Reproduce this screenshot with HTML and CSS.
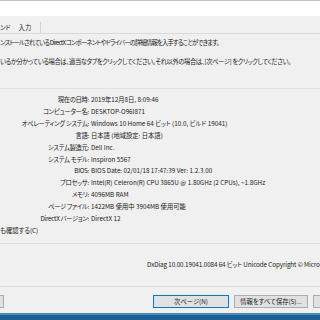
FILE: index.html
```html
<!DOCTYPE html>
<html lang="ja">
<head>
<meta charset="utf-8">
<link rel="stylesheet" href="styles.css">
</head>
<body>
<div class="screen">
  <div class="topbar"></div>
  <div class="tabs">
    <span class="tab">ンド</span>
    <span class="tab last">入力</span>
  </div>
  <div class="page">
    <p class="intro first">ンストールされている DirectX コンポーネントやドライバーの詳細情報を入手することができます。</p>
    <p class="intro second">いるか分かっている場合は、適当なタブをクリックしてください。それ以外の場合は、[次ページ] をクリックしてください。</p>
    <div class="group">
      <div class="info">
        <span class="label">現在の日時:</span><span class="value">2019年12月8日, 8:09:46</span>
        <span class="label">コンピューター名:</span><span class="value">DESKTOP-O96I871</span>
        <span class="label">オペレーティング システム:</span><span class="value">Windows 10 Home 64 ビット (10.0, ビルド 19041)</span>
        <span class="label">言語:</span><span class="value">日本語 (地域設定: 日本語)</span>
        <span class="label">システム製造元:</span><span class="value">Dell Inc.</span>
        <span class="label">システム モデル:</span><span class="value">Inspiron 5567</span>
        <span class="label">BIOS:</span><span class="value">BIOS Date: 02/01/18 17:47:39 Ver: 1.2.3.00</span>
        <span class="label">プロセッサ:</span><span class="value">Intel(R) Celeron(R) CPU 3865U @ 1.80GHz (2 CPUs), ~1.8GHz</span>
        <span class="label">メモリ:</span><span class="value">4096MB RAM</span>
        <span class="label">ページ ファイル:</span><span class="value">1422MB 使用中 3904MB 使用可能</span>
        <span class="label">DirectX バージョン:</span><span class="value">DirectX 12</span>
      </div>
      <div class="check">も確認する(C)</div>
    </div>
    <div class="version">DxDiag 10.00.19041.0084 64 ビット Unicode Copyright © Microsoft. All rights reserved.</div>
  </div>
  <div class="buttons">
    <span class="btn help">ヘルプ(H)</span>
    <span class="btn next">次ページ(N)</span>
    <span class="btn save">情報をすべて保存(S)...</span>
    <span class="btn exit">終了(X)</span>
  </div>
  <div class="taskbar"></div>
</div>
</body>
</html>
```
FILE: styles.css
```css
html, body {
  margin: 0;
  padding: 0;
  background: #f0f0f0;
}
.screen {
  width: 320px;
  height: 320px;
  overflow: hidden;
  background: #f0f0f0;
  font-family: "Noto Sans CJK JP", "Noto Sans", sans-serif;
  font-feature-settings: "palt";
  font-size: 6.3px;
  color: #1a1a1a;
  white-space: nowrap;
}
.topbar {
  height: 15px;
  background: #ffffff;
  border-top: 1px solid #c4c4c4;
}
.tabs {
  height: 17px;
  display: flex;
  align-items: flex-end;
}
.tab {
  height: 11px;
  line-height: 11px;
  padding: 0 3px;
}
.tab:first-child {
  padding-left: 0;
  padding-right: 5px;
}
.tab.last {
  padding-right: 9px;
  border-right: 1px solid #d4d4d4;
}
.page {
  border-top: 1px solid #dadada;
  border-bottom: 1px solid #dcdcdc;
  padding-bottom: 15px;
}
.intro {
  margin: 0;
  line-height: 12px;
}
.intro.first { margin-top: 3px; letter-spacing: -0.8px; }
.intro.second { margin-top: 7px; letter-spacing: -0.4px; }
.group {
  margin-top: 20px;
  border-top: 1px solid #e0e0e0;
  border-bottom: 1px solid #dcdcdc;
  padding: 5px 0 6px;
}
.info {
  display: grid;
  grid-template-columns: 89px 1fr;
  column-gap: 2px;
  line-height: 11.9px;
}
.label { text-align: right; letter-spacing: -0.3px; }
.check { line-height: 12px; }
.version {
  margin-top: 15px;
  padding-left: 147px;
  line-height: 12px;
  letter-spacing: -0.1px;
}
.buttons {
  display: flex;
  padding-top: 8px;
  height: 13px;
}
.btn {
  flex: none;
  box-sizing: border-box;
  height: 13px;
  line-height: 11px;
  text-align: center;
  background: #e1e1e1;
  border: 1px solid #adadad;
}
.help { width: 75px; margin-left: -71px; }
.next { width: 76px; margin-left: 149px; border-color: #0078d7; }
.save { width: 74px; margin-left: 5px; }
.exit { width: 74px; margin-left: 5px; }
.taskbar {
  margin-top: 5px;
  height: 7px;
  background: linear-gradient(#3a8fd2 0, #3a8fd2 2px, #1d5f92 2px);
}
```
